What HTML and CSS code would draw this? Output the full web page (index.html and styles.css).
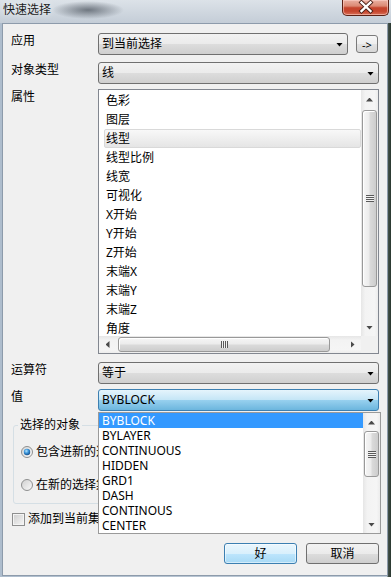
FILE: index.html
```html
<!DOCTYPE html>
<html>
<head>
<meta charset="utf-8">
<title>快速选择</title>
<link rel="stylesheet" href="styles.css">
</head>
<body>
<div class="window">
  <div class="titlebar">
    <div class="title">快速选择</div>
    <div class="close">
      <svg width="45" height="15" viewBox="0 0 45 15">
        <path d="M18.5 2.5 L27.5 11 M27.5 2.5 L18.5 11" stroke="#4a2018" stroke-width="4.2" stroke-linecap="square" fill="none"/>
        <path d="M18.5 2.5 L27.5 11 M27.5 2.5 L18.5 11" stroke="#ffffff" stroke-width="2.4" stroke-linecap="square" fill="none"/>
      </svg>
    </div>
  </div>
  <div class="client">
    <div class="row">
      <div class="lbl">应用</div>
      <div class="combo combo-apply"><span class="val">到当前选择</span><span class="arrow"></span></div>
      <button class="mini">-&gt;</button>
    </div>
    <div class="row row-type">
      <div class="lbl">对象类型</div>
      <div class="combo"><span class="val">线</span><span class="arrow"></span></div>
    </div>
    <div class="row row-props">
      <div class="lbl">属性</div>
      <div class="listbox">
        <div class="items">
          <div class="item">色彩</div>
          <div class="item">图层</div>
          <div class="item sel">线型</div>
          <div class="item">线型比例</div>
          <div class="item">线宽</div>
          <div class="item">可视化</div>
          <div class="item">X开始</div>
          <div class="item">Y开始</div>
          <div class="item">Z开始</div>
          <div class="item">末端X</div>
          <div class="item">末端Y</div>
          <div class="item">末端Z</div>
          <div class="item">角度</div>
        </div>
        <div class="vscroll">
          <div class="sbtn up"><span class="tri-up"></span></div>
          <div class="vthumb lb-vthumb"><span class="grip-v"></span></div>
          <div class="spacer"></div>
          <div class="sbtn"><span class="tri-down"></span></div>
        </div>
        <div class="hscroll">
          <div class="sbtn"><span class="tri-left"></span></div>
          <div class="hthumb"><span class="grip-h"></span></div>
          <div class="spacer"></div>
          <div class="sbtn"><span class="tri-right"></span></div>
        </div>
        <div class="corner"></div>
      </div>
    </div>
    <div class="row row-op">
      <div class="lbl">运算符</div>
      <div class="combo"><span class="val">等于</span><span class="arrow"></span></div>
    </div>
    <div class="row row-val">
      <div class="lbl">值</div>
      <div class="combo focus">
        <span class="val">BYBLOCK</span><span class="arrow"></span>
        <div class="dropdown">
          <div class="dd-items">
            <div class="dd-item hl">BYBLOCK</div>
            <div class="dd-item">BYLAYER</div>
            <div class="dd-item">CONTINUOUS</div>
            <div class="dd-item">HIDDEN</div>
            <div class="dd-item">GRD1</div>
            <div class="dd-item">DASH</div>
            <div class="dd-item">CONTINOUS</div>
            <div class="dd-item">CENTER</div>
          </div>
          <div class="vscroll">
            <div class="sbtn up"><span class="tri-up"></span></div>
            <div class="vthumb dd-vthumb"><span class="grip-v"></span></div>
            <div class="spacer"></div>
            <div class="sbtn"><span class="tri-down"></span></div>
          </div>
        </div>
      </div>
    </div>
    <fieldset class="group">
      <legend>选择的对象</legend>
      <div class="radio r1">
        <svg width="12" height="12" viewBox="0 0 12 12">
          <defs>
            <linearGradient id="rbg" x1="0" y1="0" x2="1" y2="1"><stop offset="0" stop-color="#d6d6d6"/><stop offset="1" stop-color="#fbfbfb"/></linearGradient>
            <radialGradient id="rdot" cx="0.4" cy="0.35" r="0.75"><stop offset="0" stop-color="#b8e6ff"/><stop offset="0.45" stop-color="#3a95da"/><stop offset="1" stop-color="#0f3e78"/></radialGradient>
          </defs>
          <circle cx="6" cy="6" r="5.5" fill="url(#rbg)" stroke="#8e8f8f"/>
          <circle cx="6" cy="6" r="3.2" fill="url(#rdot)"/>
        </svg>
        <span class="cut">包含进新的选择集</span>
      </div>
      <div class="radio r2">
        <svg width="12" height="12" viewBox="0 0 12 12">
          <defs>
            <linearGradient id="rbg2" x1="0" y1="0" x2="1" y2="1"><stop offset="0" stop-color="#cfcfcf"/><stop offset="1" stop-color="#fbfbfb"/></linearGradient>
          </defs>
          <circle cx="6" cy="6" r="5.5" fill="url(#rbg2)" stroke="#8e8f8f"/>
        </svg>
        <span class="cut">在新的选择集之外</span>
      </div>
    </fieldset>
    <div class="check">
      <span class="box"></span>
      <span class="cut cut-check">添加到当前集合</span>
    </div>
    <div class="buttons">
      <button class="btn default">好</button>
      <button class="btn">取消</button>
    </div>
  </div>
</div>
</body>
</html>
```
FILE: styles.css
```css
* { box-sizing: border-box; }
html, body { margin: 0; padding: 0; }
body {
  width: 391px;
  height: 577px;
  overflow: hidden;
  font-family: "Noto Sans", "Noto Sans CJK SC", sans-serif;
  font-size: 12px;
  color: #000;
  background: linear-gradient(to right, #aebdcd 0, #c0ccd8 387px, #46544c 388px, #28362f 391px);
}
.window {
  width: 391px;
  height: 577px;
  display: flex;
  flex-direction: column;
}
.titlebar {
  height: 23px;
  flex: none;
  display: flex;
  justify-content: space-between;
  align-items: flex-start;
  background:
    radial-gradient(ellipse 36px 9px at 88px 10px, rgba(78, 86, 96, 0.75), rgba(78, 86, 96, 0)),
    linear-gradient(#dce2e8, #c4cdd7);
}
.title {
  padding-left: 3px;
  line-height: 20px;
  color: #1b1b1b;
  text-shadow: 0 0 6px rgba(255, 255, 255, 0.9);
}
.close {
  width: 47px;
  height: 16px;
  margin-right: 2px;
  border: 1px solid #5b2014;
  border-top: none;
  border-radius: 0 0 5px 5px;
  background: linear-gradient(#eab0a2 0%, #dc8a74 40%, #c5452d 52%, #c6452d 75%, #d87058 100%);
  box-shadow: inset 0 0 0 1px rgba(255, 215, 205, 0.55);
  display: flex;
  justify-content: center;
}
.client {
  margin-left: 2px;
  width: 386px;
  height: 553px;
  flex: none;
  border: 1px solid #8d9bab;
  background: #f0f0f0;
  padding: 9px 8px 0 8px;
}
.row {
  display: flex;
  align-items: flex-start;
}
.row-type { margin-top: 7px; }
.row-props { margin-top: 5px; }
.row-op { margin-top: 8px; }
.row-val { margin-top: 5px; }
.lbl {
  width: 87px;
  flex: none;
  line-height: 16px;
}
.combo {
  flex: 1;
  position: relative;
  height: 22px;
  display: flex;
  align-items: center;
  border: 1px solid #707070;
  border-radius: 3px;
  background: linear-gradient(#f2f2f2, #ebebeb 50%, #dddddd 50%, #cfcfcf);
  padding-left: 3px;
}
.combo-apply { flex: none; width: 250px; }
.combo .val {
  flex: 1;
  line-height: 20px;
  white-space: nowrap;
}
.combo .arrow {
  width: 7px;
  height: 4px;
  margin-right: 4px;
  margin-top: 1px;
  background: #000;
  clip-path: polygon(0 0, 100% 0, 50% 100%);
}
.combo.focus {
  border-color: #3c7fb1;
  background: linear-gradient(#e5f4fc, #c4e5f6 50%, #98d1ef 50%, #6cb6de);
}
.mini {
  width: 22px;
  height: 18px;
  margin: 2px 0 0 8px;
  padding: 0;
  border: 1px solid #7a7a7a;
  border-radius: 3px;
  background: linear-gradient(#f6f6f6, #eeeeee 50%, #e2e2e2 50%, #d6d6d6);
  font-family: inherit;
  font-size: 11px;
  line-height: 15px;
  color: #000;
}
.listbox {
  flex: 1;
  height: 265px;
  border: 1px solid #828790;
  background: #fff;
  display: grid;
  grid-template-columns: 1fr 17px;
  grid-template-rows: 1fr 17px;
}
.items {
  overflow: hidden;
  padding-top: 1px;
}
.item {
  height: 19px;
  line-height: 17px;
  border: 1px solid transparent;
  margin-left: 5px;
  padding-left: 1px;
  white-space: nowrap;
}
.item.sel {
  border-color: #d9d9d9;
  border-radius: 2px;
  background: linear-gradient(#f8f8f8, #e5e5e5);
}
.vscroll {
  display: flex;
  flex-direction: column;
  background: linear-gradient(to right, #e6e6e6, #f3f3f3 25%, #f5f5f5 80%, #ececec);
}
.hscroll {
  display: flex;
  background: linear-gradient(#e6e6e6, #f3f3f3 25%, #f5f5f5 80%, #ececec);
}
.corner { background: #f0f0f0; }
.spacer { flex: 1; }
.sbtn {
  width: 17px;
  height: 17px;
  flex: none;
  display: flex;
  align-items: center;
  justify-content: center;
}
.sbtn.up { padding-top: 2px; }
.tri-up, .tri-down {
  width: 7px;
  height: 4px;
  background: #4a4a4a;
}
.tri-up { clip-path: polygon(50% 0, 100% 100%, 0 100%); }
.tri-down { clip-path: polygon(0 0, 100% 0, 50% 100%); }
.tri-left, .tri-right {
  width: 4px;
  height: 7px;
  background: #4a4a4a;
}
.tri-left { clip-path: polygon(100% 0, 100% 100%, 0 50%); }
.tri-right { clip-path: polygon(0 0, 100% 50%, 0 100%); }
.vthumb {
  flex: none;
  margin: 3px 1px 0 1px;
  border: 1px solid #999;
  border-radius: 3px;
  background: linear-gradient(to right, #f6f6f6 0%, #ececec 45%, #dadada 55%, #cdcdcd 100%);
  box-shadow: inset 1px 1px 0 #fff;
  display: flex;
  align-items: center;
  justify-content: center;
}
.lb-vthumb { height: 177px; }
.dd-vthumb { height: 46px; margin-top: 1px; }
.grip-v {
  width: 8px;
  height: 7px;
  background: repeating-linear-gradient(#5a5a5a 0 1px, #f2f2f2 1px 2px);
}
.hthumb {
  flex: none;
  width: 212px;
  margin: 1px 0 1px 2px;
  border: 1px solid #999;
  border-radius: 3px;
  background: linear-gradient(#f6f6f6 0%, #ececec 45%, #dadada 55%, #cdcdcd 100%);
  box-shadow: inset 1px 1px 0 #fff;
  display: flex;
  align-items: center;
  justify-content: center;
}
.grip-h {
  width: 7px;
  height: 7px;
  background: repeating-linear-gradient(to right, #5a5a5a 0 1px, #f2f2f2 1px 2px);
}
.dropdown {
  position: absolute;
  top: 22px;
  left: -1px;
  width: 283px;
  border: 1px solid #9a9a9a;
  background: #fff;
  display: flex;
  z-index: 5;
}
.dd-items { flex: 1; }
.dd-item {
  height: 15px;
  line-height: 15px;
  padding-left: 3px;
  white-space: nowrap;
}
.dd-item.hl {
  background: #3399ff;
  color: #fff;
}
.dropdown .vscroll { width: 17px; flex: none; }
.group {
  margin: 6px 0 0 2px;
  padding: 0 4px 10px 4px;
  border: 1px solid #d5dfe5;
  border-radius: 3px;
  min-width: 0;
}
.group legend {
  padding: 0 2px;
  line-height: 16px;
}
.radio {
  display: flex;
  align-items: center;
  gap: 3px;
  height: 16px;
  margin-left: 3px;
  white-space: nowrap;
}
.radio.r1 { margin-top: 11px; }
.radio.r2 { margin-top: 17px; }
.cut {
  display: block;
  width: 62px;
  overflow: hidden;
  white-space: nowrap;
  line-height: 16px;
}
.cut-check { width: 70px; }
.check {
  display: flex;
  align-items: center;
  gap: 3px;
  height: 16px;
  margin: 7px 0 0 1px;
  white-space: nowrap;
}
.check .box {
  width: 13px;
  height: 13px;
  border: 1px solid #8e8f8f;
  background: linear-gradient(135deg, #cdcdcd, #f7f7f7);
  box-shadow: inset 0 0 0 1px #f4f4f4;
}
.buttons {
  display: flex;
  justify-content: flex-end;
  gap: 9px;
  margin-top: 16px;
}
.btn {
  width: 73px;
  height: 21px;
  padding: 0;
  border: 1px solid #707070;
  border-radius: 3px;
  background: linear-gradient(#f2f2f2, #ebebeb 50%, #dddddd 50%, #cfcfcf);
  font-family: inherit;
  font-size: 12px;
  line-height: 19px;
  color: #000;
}
.btn.default {
  border-color: #3c7fb1;
  background: linear-gradient(#eaf6fd, #d9f0fc 50%, #bee6fd 50%, #a7d9f5);
  box-shadow: inset 0 0 0 1px rgba(255, 255, 255, 0.5);
}
```
